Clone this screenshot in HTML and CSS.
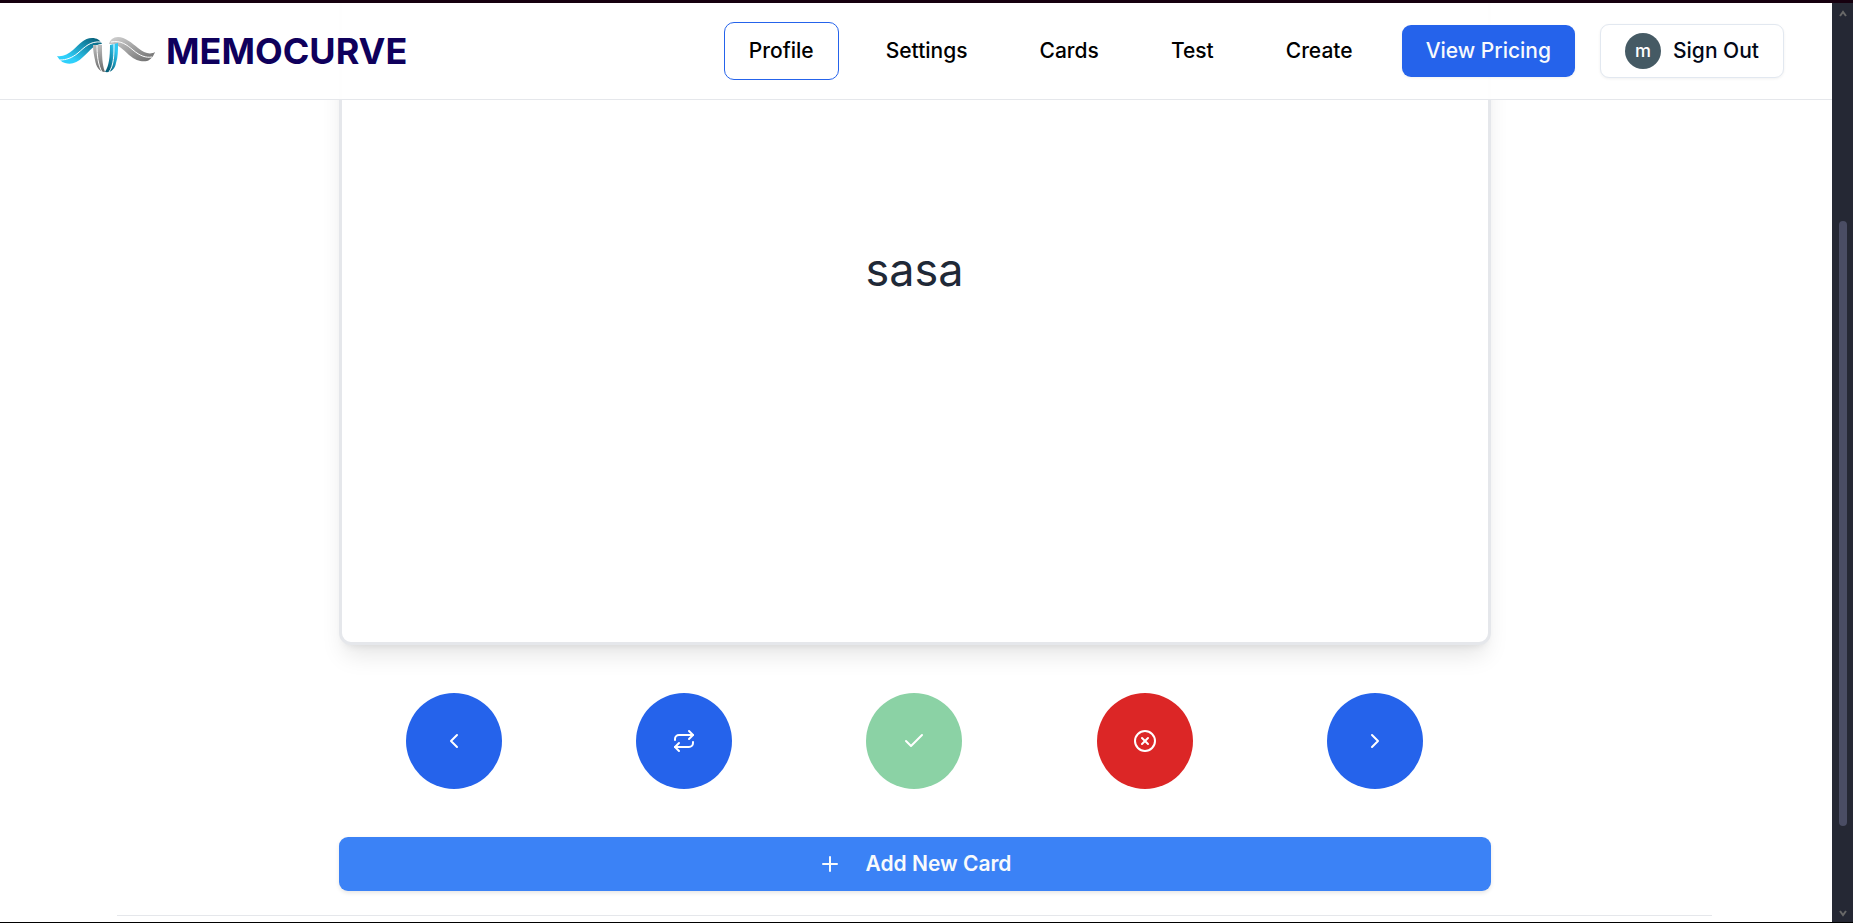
FILE: index.html
```html
<!DOCTYPE html>
<html lang="en">
<head>
<meta charset="utf-8">
<title>Memocurve</title>
<link rel="stylesheet" href="styles.css">
</head>
<body>
<div class="window">
  <div class="viewport">
    <header class="header">
      <a class="brand" href="#">
        <svg class="brand-mark" width="100" height="36" viewBox="0 0 100 36" aria-hidden="true">
          <defs>
            <linearGradient id="teal" x1="0" y1="1" x2="1" y2="0"><stop offset="0.25" stop-color="#2fd0fb"/><stop offset="1" stop-color="#04566e"/></linearGradient>
            <linearGradient id="gray" x1="0" y1="0" x2="1" y2="1"><stop offset="0.1" stop-color="#c9c9c9"/><stop offset="1" stop-color="#6a6a6a"/></linearGradient>
            <linearGradient id="tealDown" x1="1" y1="0" x2="0" y2="1"><stop offset="0.2" stop-color="#2fc8f2"/><stop offset="0.8" stop-color="#04607a"/></linearGradient>
            <linearGradient id="grayDown" x1="0" y1="0" x2="0" y2="1"><stop offset="0" stop-color="#bdbdbd"/><stop offset="1" stop-color="#6a6a6a"/></linearGradient>
          </defs>
          <path fill="url(#teal)" d="M1 19C7 20 12 17 17 13C24 7 28 1 36 1C41 1 44 3 46 7C38 7 34 14 27 20C21 26 15 28 9 26C5 25 3 22 1 19Z"/>
          <path fill="none" stroke="#fff" stroke-width="1" d="M4 23C10 23 16 21 22 16C29 10 34 4 45 5"/>
          <path fill="url(#gray)" d="M99 15C94 18 88 16 82 11C76 6 69 0 62 0C57 0 54 3 53 7C61 6 67 12 73 18C80 24 86 25 91 24C95 23 98 18 99 15Z"/>
          <path fill="none" stroke="#fff" stroke-width="1" d="M96 20C90 21 84 19 77 13C71 8 65 3 55 5"/>
          <path fill="url(#grayDown)" d="M37 8H46C46 18 46 27 49 35C43 35 40 29 39 23C38 18 37 14 37 8Z"/>
          <path fill="none" stroke="#fff" stroke-width="1" d="M41 8C41 18 42 28 46 35"/>
          <path fill="url(#tealDown)" d="M54 8L62 6C62 14 62 20 60 26C59 32 55 36 49 35C53 29 54 20 54 8Z"/>
          <path fill="none" stroke="#fff" stroke-width="1" d="M58 7C58 18 58 28 53 35"/>
        </svg>
        <span class="brand-name">MEMOCURVE</span>
      </a>
      <nav class="nav">
        <a class="nav-link active" href="#">Profile</a>
        <a class="nav-link" href="#">Settings</a>
        <a class="nav-link" href="#">Cards</a>
        <a class="nav-link" href="#">Test</a>
        <a class="nav-link" href="#">Create</a>
      </nav>
      <div class="actions">
        <button class="btn primary" type="button">View Pricing</button>
        <button class="btn outline" type="button"><span class="avatar">m</span>Sign Out</button>
      </div>
    </header>
    <main class="main">
      <div class="study">
        <section class="flashcard"><p class="term">sasa</p></section>
        <div class="controls">
          <button class="round" type="button" aria-label="Previous"><svg class="icon" viewBox="0 0 24 24"><path d="m15 18-6-6 6-6"/></svg></button>
          <button class="round" type="button" aria-label="Flip"><svg class="icon" viewBox="0 0 24 24"><path d="m17 2 4 4-4 4"/><path d="M3 11v-1a4 4 0 0 1 4-4h14"/><path d="m7 22-4-4 4-4"/><path d="M21 13v1a4 4 0 0 1-4 4H3"/></svg></button>
          <button class="round known" type="button" aria-label="Known"><svg class="icon" viewBox="0 0 24 24"><path d="M20 6 9 17l-5-5"/></svg></button>
          <button class="round unknown" type="button" aria-label="Unknown"><svg class="icon" viewBox="0 0 24 24"><circle cx="12" cy="12" r="10"/><path d="m15 9-6 6"/><path d="m9 9 6 6"/></svg></button>
          <button class="round" type="button" aria-label="Next"><svg class="icon" viewBox="0 0 24 24"><path d="m9 18 6-6-6-6"/></svg></button>
        </div>
        <button class="add" type="button"><svg class="icon" viewBox="0 0 24 24"><path d="M5 12h14"/><path d="M12 5v14"/></svg>Add New Card</button>
      </div>
      <hr class="divider">
    </main>
  </div>
  <div class="scrollbar" aria-hidden="true">
    <svg class="arrow" viewBox="0 0 8 8"><path d="M1 6l3-4 3 4"/></svg>
    <div class="track"><div class="thumb"></div></div>
    <svg class="arrow" viewBox="0 0 8 8"><path d="M1 2l3 4 3-4"/></svg>
  </div>
</div>
</body>
</html>
```
FILE: styles.css
```css
* { box-sizing: border-box; }

body {
  margin: 0;
  font-family: Inter, "Liberation Sans", sans-serif;
  font-size: 21px;
  line-height: 30px;
  color: #020817;
}

.window {
  display: flex;
  height: 100vh;
  border-top: 3px solid #16000f;
  border-bottom: 1px solid #000;
  overflow: hidden;
}

.viewport {
  position: relative;
  flex: 1;
  min-width: 0;
  display: flex;
  flex-direction: column;
  background: #fff;
}

.header {
  position: absolute;
  inset: 0 0 auto 0;
  z-index: 1;
  display: flex;
  align-items: center;
  height: 97px;
  padding: 0 48px 0 56px;
  background: rgba(255, 255, 255, 0.95);
  border-bottom: 1px solid #e5e7eb;
}

.brand {
  display: flex;
  align-items: center;
  gap: 10px;
  margin-right: auto;
  text-decoration: none;
}

.brand-mark { display: block; margin-top: 7px; }

.brand-name {
  font-family: Inter, "Liberation Sans", sans-serif;
  font-size: 36px;
  line-height: 40px;
  font-weight: 700;
  color: #0f005c;
}

.nav { display: flex; gap: 22px; }

.nav-link {
  padding: 13px 24px;
  border: 1px solid transparent;
  border-radius: 10px;
  font-weight: 500;
  color: #000;
  text-decoration: none;
}

.nav-link.active { border-color: #2563eb; }

.actions { display: flex; align-items: center; gap: 25px; margin-left: 24px; }

.btn {
  display: flex;
  align-items: center;
  gap: 12px;
  padding: 11px 24px;
  border: 0;
  border-radius: 9px;
  font: inherit;
  font-weight: 500;
  box-shadow: 0 1px 3px rgba(0, 0, 0, 0.06);
}

.btn.primary { background: #2563eb; color: #f8fafc; }

.btn.outline {
  padding: 8px 24px;
  background: #fff;
  border: 1px solid #e2e8f0;
  color: #020817;
}

.avatar {
  width: 36px;
  height: 36px;
  border-radius: 50%;
  background: #455a64;
  color: #fff;
  font-size: 18px;
  line-height: 35px;
  font-weight: 500;
  text-align: center;
}

.main {
  flex: 1;
  min-height: 0;
  display: flex;
  flex-direction: column;
  justify-content: flex-end;
  align-items: center;
  padding: 0 120px 6px 117px;
  overflow: hidden;
}

.study {
  display: flex;
  flex-direction: column;
  gap: 48px;
  width: 100%;
  max-width: 1152px;
}

.flashcard {
  display: grid;
  place-items: center;
  min-height: 750px;
  border: 3px solid #e5e7eb;
  border-radius: 12px;
  background: #fff;
  box-shadow: 0 15px 23px -5px rgba(0, 0, 0, 0.1), 0 6px 9px -6px rgba(0, 0, 0, 0.1);
}

.term {
  margin: 0;
  font-size: 45px;
  line-height: 60px;
  color: #1f2937;
}

.controls {
  display: grid;
  grid-template-columns: repeat(5, 1fr);
  justify-items: center;
}

.round {
  display: grid;
  place-items: center;
  width: 96px;
  height: 96px;
  padding: 0;
  border: 0;
  border-radius: 50%;
  background: #2563eb;
  color: #fff;
}

.round.known { background: #8bd2a5; }
.round.unknown { background: #dc2626; }

.icon {
  display: block;
  width: 24px;
  height: 24px;
  fill: none;
  stroke: currentColor;
  stroke-width: 2;
  stroke-linecap: round;
  stroke-linejoin: round;
}

.add {
  display: flex;
  align-items: center;
  justify-content: center;
  gap: 24px;
  padding: 12px 24px;
  border: 0;
  border-radius: 9px;
  background: #3b82f6;
  color: #f8fafc;
  font: inherit;
  font-weight: 600;
  box-shadow: 0 2px 4px rgba(0, 0, 0, 0.1);
}

.divider {
  width: 100%;
  margin: 24px 0 0;
  border: 0;
  border-top: 1px solid #e5e7eb;
}

.scrollbar {
  display: flex;
  flex-direction: column;
  align-items: center;
  justify-content: space-between;
  width: 21px;
  padding: 7px 0 5px;
  background: #252834;
}

.arrow {
  width: 8px;
  height: 8px;
  fill: none;
  stroke: #686868;
  stroke-width: 2;
}

.track {
  flex: 1;
  display: flex;
  flex-direction: column;
  padding: 203px 0 83px;
}

.thumb { flex: 1; width: 8px; border-radius: 4px; background: #4a4d64; }
```
